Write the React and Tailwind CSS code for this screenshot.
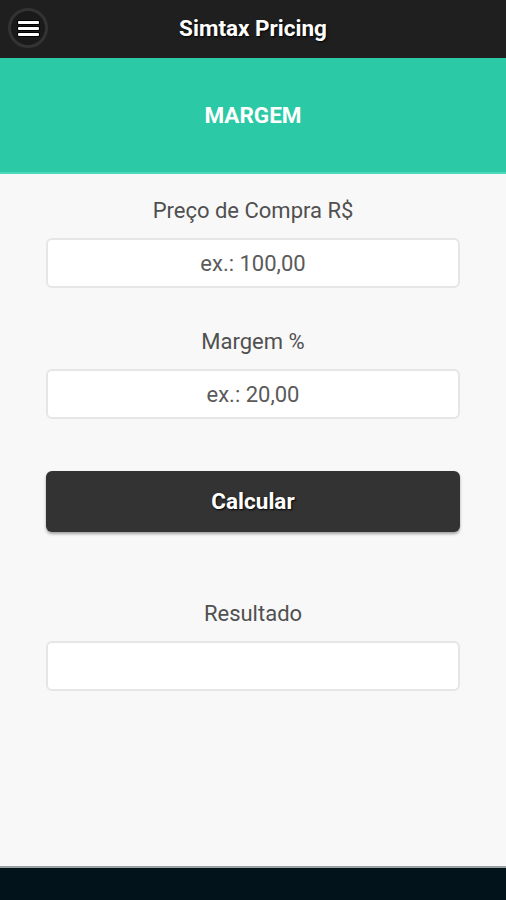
export default function App() {
  const font = { fontFamily: "Roboto, 'Noto Sans', sans-serif" };

  const Field = ({ label, placeholder, mt }) => (
    <div className={`flex flex-col items-center ${mt}`}>
      <label className="text-[22px] leading-[22px] text-[#505050]">{label}</label>
      <div className="mt-[16px] w-full h-[50px] bg-white border-2 border-[#e6e6e6] rounded-[6px] flex items-center justify-center text-[22px] text-[#5a5a5a]">
        {placeholder}
      </div>
    </div>
  );

  return (
    <div className="w-[506px] h-[900px] bg-[#f8f8f8] flex flex-col overflow-hidden" style={font}>
      <header className="h-[58px] bg-[#1f1f1f] flex items-center relative">
        <div className="absolute left-[8px] top-[8px] w-[40px] h-[40px] rounded-full bg-[#1a1a1a] border-[3px] border-[#333333] flex flex-col items-center justify-center gap-[3px]">
          <span className="block w-[21px] h-[3px] bg-white rounded-[1px] shadow-[0_0_0_1px_#000]" />
          <span className="block w-[21px] h-[3px] bg-white rounded-[1px] shadow-[0_0_0_1px_#000]" />
          <span className="block w-[21px] h-[3px] bg-white rounded-[1px] shadow-[0_0_0_1px_#000]" />
        </div>
        <h1 className="flex-1 text-center text-white font-bold text-[22.5px] [text-shadow:1px_1px_2px_#000]">
          Simtax Pricing
        </h1>
      </header>

      <div className="h-[116px] bg-[#2bc9a6] border-b-[2px] border-[#4fd9bb] flex items-center justify-center">
        <span className="text-white font-bold text-[22.5px] pt-[2px]">MARGEM</span>
      </div>

      <main className="flex-1 px-[46px] pt-[26px]">
        <Field label="Preço de Compra R$" placeholder="ex.: 100,00" mt="" />
        <Field label="Margem %" placeholder="ex.: 20,00" mt="mt-[43px]" />

        <button className="mt-[52px] w-full h-[61px] bg-[#333333] rounded-[6px] shadow-[0_2px_3px_rgba(0,0,0,0.35)] text-white font-bold text-[22.5px] [text-shadow:1px_1px_2px_#000]">
          Calcular
        </button>

        <Field label="Resultado" placeholder="" mt="mt-[71px]" />
      </main>

      <footer className="h-[34px] bg-[#02131b] border-t-[2px] border-[#9aa0a0]" />
    </div>
  );
}
